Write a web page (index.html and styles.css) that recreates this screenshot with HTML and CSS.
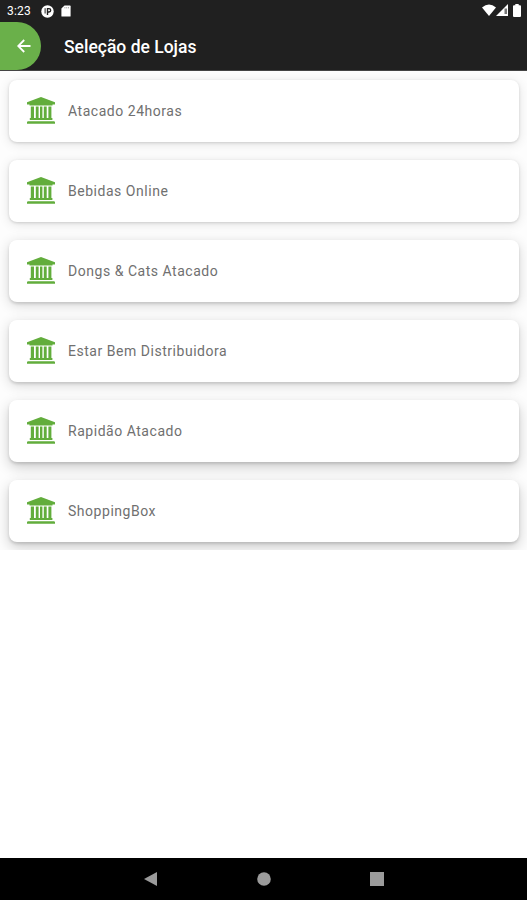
FILE: index.html
```html
<!DOCTYPE html>
<html lang="pt-BR">
<head>
    <meta charset="UTF-8">
    <meta name="viewport" content="width=device-width, initial-scale=1.0">
    <title>Seleção de Lojas</title>
    <link rel="stylesheet" href="styles.css">
</head>
<body>

<svg class="sprite" width="0" height="0">
    <symbol id="store" viewBox="0 0 28 27">
        <path d="M14 0 L28 5.2 V7.4 H25.5 V8.6 H2.5 V7.4 H0 V5.2 Z"/>
        <path d="M3.8 9.5h3.2v12.4h-3.2z M8.8 9.5h2.8v12.4h-2.8z M13 9.5h2.4v12.4h-2.4z M16.8 9.5h2.9v12.4h-2.9z M21.4 9.5h3v12.4h-3z"/>
        <path d="M2.8 21h22.6v2h-22.6z M.8 24.2h26.4l.8 .8v1.7H0V25z"/>
    </symbol>
</svg>

<header>
    <div class="status-bar">
        <span class="time">3:23</span>
        <svg class="app-icon" width="13" height="13" viewBox="0 0 13 13">
            <circle cx="6.5" cy="6.5" r="6.2" fill="#fff"/>
            <path d="M6.5 10V3.6H8A1.7 1.7 0 0 1 8 7H6.5" fill="none" stroke="#202020" stroke-width="1.4"/>
            <path d="M4.1 3.2V8.5" stroke="#202020" stroke-width="1"/>
        </svg>
        <svg class="sd-icon" width="10" height="12" viewBox="0 0 10 12">
            <path d="M3.5 .5H9Q9.6 .5 9.6 1.2V11Q9.6 11.5 9 11.5H1Q.4 11.5 .4 11V3.6Z" fill="#fff"/>
            <path d="M3.9 2v1.4M5.7 2v1.4M7.5 2v1.4" stroke="#999" stroke-width=".8"/>
        </svg>
        <div class="system">
            <svg width="14" height="12" viewBox="0 0 14 12">
                <path d="M0 3.6Q7-2.4 14 3.6L7 12Z" fill="#fff"/>
            </svg>
            <svg width="12" height="12" viewBox="0 0 12 12">
                <path d="M12 0V12H0Z" fill="#fff"/>
                <path d="M8.5 4.5H11V10H8.5Z" fill="#777"/>
            </svg>
            <svg class="battery" width="8" height="13" viewBox="0 0 8 13">
                <path d="M2.3 0H5.7V1.2H7Q8 1.2 8 2.2V12Q8 13 7 13H1Q0 13 0 12V2.2Q0 1.2 1 1.2H2.3Z" fill="#fff"/>
            </svg>
        </div>
    </div>
    <div class="toolbar">
        <div class="back">
            <svg width="14" height="14" viewBox="0 0 14 14">
                <path d="M13.5 7H1.5M7.2 1L1.2 7L7.2 13" fill="none" stroke="#fff" stroke-width="1.8"/>
            </svg>
        </div>
        <h1>Seleção de Lojas</h1>
    </div>
</header>

<main class="list">
    <div class="card"><svg class="icon"><use href="#store"/></svg><span>Atacado 24horas</span></div>
    <div class="card"><svg class="icon"><use href="#store"/></svg><span>Bebidas Online</span></div>
    <div class="card"><svg class="icon"><use href="#store"/></svg><span>Dongs &amp; Cats Atacado</span></div>
    <div class="card"><svg class="icon"><use href="#store"/></svg><span>Estar Bem Distribuidora</span></div>
    <div class="card"><svg class="icon"><use href="#store"/></svg><span>Rapidão Atacado</span></div>
    <div class="card"><svg class="icon"><use href="#store"/></svg><span>ShoppingBox</span></div>
</main>

<nav>
    <svg width="13" height="14" viewBox="0 0 13 14"><path d="M13 0V14L0 7Z"/></svg>
    <svg width="14" height="14" viewBox="0 0 14 14"><circle cx="7" cy="7" r="6.8"/></svg>
    <svg width="14" height="14" viewBox="0 0 14 14"><rect width="14" height="14"/></svg>
</nav>

</body>
</html>
```
FILE: styles.css
```css
* {
    box-sizing: border-box;
}

body {
    font-family: Roboto, "Liberation Sans", sans-serif;
    background-color: #fff;
    margin: 0;
    height: 100vh;
    display: flex;
    flex-direction: column;
    overflow: hidden;
}

.sprite {
    position: absolute;
}

header {
    background-color: #202020;
    color: #fff;
    height: 71px;
    border-bottom: 1px solid #444;
}

.status-bar {
    display: flex;
    align-items: center;
    height: 22px;
    padding: 0 6px 0 7px;
}

.time {
    font-size: 12px;
    width: 34px;
    letter-spacing: 0.2px;
}

.sd-icon {
    margin-left: 7px;
}

.system {
    display: flex;
    align-items: center;
    margin-left: auto;
    padding-bottom: 2px;
}

.battery {
    margin-left: 5px;
}

.toolbar {
    display: flex;
    align-items: center;
    height: 48px;
}

.back {
    display: flex;
    align-items: center;
    justify-content: flex-end;
    width: 41px;
    height: 48px;
    padding-right: 10px;
    background-color: #6ab04a;
    border-radius: 0 24px 24px 0;
}

h1 {
    font-size: 17.5px;
    font-weight: 500;
    margin: 2px 0 0 23px;
}

/* Lista de lojas */
.list {
    display: flex;
    flex-direction: column;
    gap: 18px;
    height: 479px;
    padding: 9px 8px 0 9px;
    overflow: hidden;
    background-color: #fdfdfd;
}

.card {
    display: flex;
    align-items: center;
    flex: none;
    height: 62px;
    padding: 0 0 1px 18px;
    border-radius: 8px;
    background-color: #fff;
    color: #707070;
    font-size: 14px;
    letter-spacing: 0.53px;
    box-shadow: 0 1px 3px rgba(0, 0, 0, 0.14), 0 2px 12px rgba(0, 0, 0, 0.11);
}

/* a sombra cresce conforme a posição na tela */
.card:nth-child(n+3) {
    box-shadow: 0 2px 3px rgba(0, 0, 0, 0.13), 0 3px 13px rgba(0, 0, 0, 0.16);
}

.card:nth-child(n+5) {
    box-shadow: 0 2px 3px rgba(0, 0, 0, 0.13), 0 5px 14px rgba(0, 0, 0, 0.2);
}

.icon {
    width: 28px;
    height: 27px;
    margin-right: 13px;
    fill: #62ad3c;
}

nav {
    display: flex;
    align-items: center;
    justify-content: space-between;
    height: 42px;
    margin-top: auto;
    padding: 0 143px 0 144px;
    background-color: #000;
}

nav svg {
    fill: #9b9b9b;
}
```
